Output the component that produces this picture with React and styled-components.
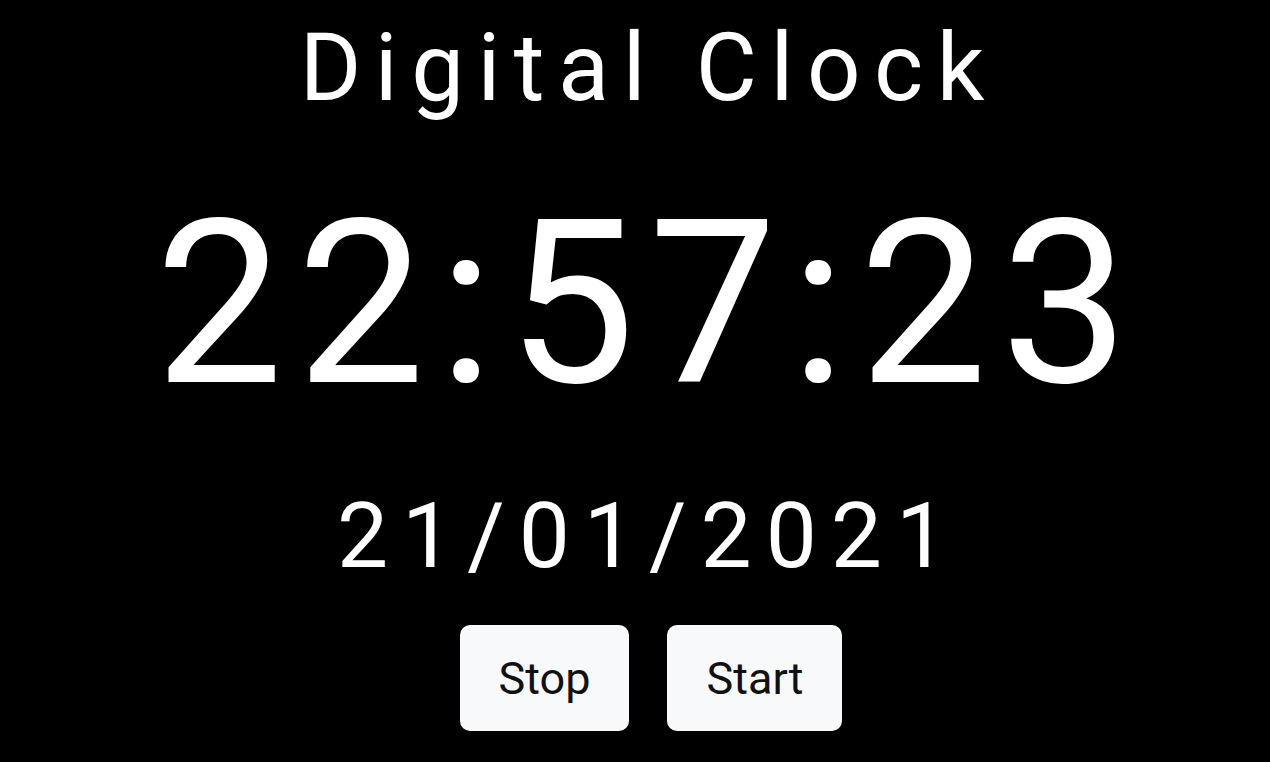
import React from 'react';
import styled, { createGlobalStyle } from 'styled-components';

const GlobalStyle = createGlobalStyle`
  html, body {
    margin: 0;
    padding: 0;
    background: #000;
  }
  body {
    font-family: Roboto, "Liberation Sans", sans-serif;
  }
`;

const Page = styled.main`
  min-height: 762px;
  display: flex;
  flex-direction: column;
  align-items: center;
  padding: 21px 0 0 14px;
  box-sizing: border-box;
  color: #fff;
`;

const Title = styled.h1`
  margin: 0;
  font-size: 94px;
  font-weight: 400;
  line-height: 1;
  letter-spacing: 13.5px;
  margin-right: -13.5px;
`;

const Time = styled.div`
  margin-top: 75px;
  font-size: 228px;
  line-height: 1;
  letter-spacing: 13.5px;
  margin-right: -13.5px;
`;

const DateText = styled.div`
  margin-top: 73px;
  font-size: 91px;
  line-height: 1;
  letter-spacing: 14px;
  margin-right: -14px;
`;

const Controls = styled.div`
  display: flex;
  gap: 38px;
  margin-top: 43px;
  margin-left: 18px;
`;

const Button = styled.button`
  height: 106px;
  padding: 0 39px;
  border: none;
  border-radius: 10px;
  background: #f8f9fa;
  color: #111;
  font-family: Roboto, "Liberation Sans", sans-serif;
  font-size: 45px;
  font-weight: 400;
  cursor: pointer;
`;

export default function App() {
  return (
    <>
      <GlobalStyle />
      <Page>
        <Title>Digital Clock</Title>
        <Time>22:57:23</Time>
        <DateText>21/01/2021</DateText>
        <Controls>
          <Button>Stop</Button>
          <Button>Start</Button>
        </Controls>
      </Page>
    </>
  );
}
